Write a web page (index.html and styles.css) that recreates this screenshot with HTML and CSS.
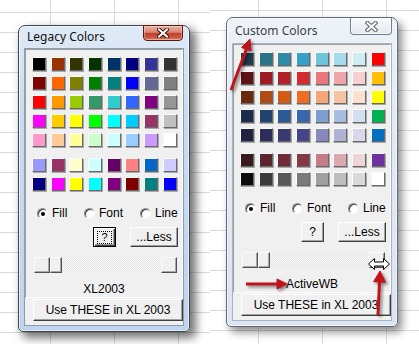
FILE: index.html
```html
<!DOCTYPE html>
<html lang="en">
<head>
    <meta charset="UTF-8">
    <title>Legacy & Custom Colors</title>
    <link rel="stylesheet" href="styles.css">
</head>
<body>

    <!-- worksheet behind the dialogs -->
    <div class="sheet">
        <div class="sheet-half sheet-left"></div>
        <div class="sheet-half sheet-right"></div>
    </div>

    <!-- Legacy Colors dialog (active) -->
    <div class="dialog dialog-legacy">
        <div class="titlebar">
            <span class="title">Legacy Colors</span>
            <button type="button" class="close close-active">
                <svg width="12" height="10" viewBox="0 0 12 10"><path d="M2 1.5 L10 8.5 M10 1.5 L2 8.5" stroke="#3b1610" stroke-width="4" stroke-linecap="square"/><path d="M2 1.5 L10 8.5 M10 1.5 L2 8.5" stroke="#fff" stroke-width="2" stroke-linecap="square"/></svg>
            </button>
        </div>
        <div class="client">
            <div class="panel">
                <div class="swatches" data-palette="legacy-main"></div>
                <div class="swatches" data-palette="legacy-chart"></div>
                <div class="radios">
                    <label class="radio"><span class="radio-dot checked"></span>Fill</label>
                    <label class="radio"><span class="radio-dot"></span>Font</label>
                    <label class="radio"><span class="radio-dot"></span>Line</label>
                </div>
                <div class="buttons">
                    <button type="button" class="btn btn-help btn-focus"><span class="focus-ring">?</span></button>
                    <button type="button" class="btn btn-less">...Less</button>
                </div>
                <div class="scrollbar">
                    <span class="sb-btn"></span>
                    <span class="sb-thumb"></span>
                    <span class="sb-track"></span>
                    <span class="sb-btn"></span>
                </div>
                <div class="caption">XL2003</div>
            </div>
            <button type="button" class="btn btn-use">Use THESE in XL 2003</button>
        </div>
    </div>

    <!-- Custom Colors dialog (inactive) -->
    <div class="dialog dialog-custom">
        <div class="titlebar">
            <span class="title">Custom Colors</span>
            <button type="button" class="close close-inactive">
                <svg width="13" height="11" viewBox="0 0 13 11"><path d="M2.5 2 L10.5 9 M10.5 2 L2.5 9" stroke="#5f6873" stroke-width="4.2" stroke-linecap="square"/><path d="M2.5 2 L10.5 9 M10.5 2 L2.5 9" stroke="#fff" stroke-width="2" stroke-linecap="square"/></svg>
            </button>
        </div>
        <div class="client">
            <div class="panel">
                <div class="swatches" data-palette="custom-main"></div>
                <div class="swatches" data-palette="custom-chart"></div>
                <div class="radios">
                    <label class="radio"><span class="radio-dot checked"></span>Fill</label>
                    <label class="radio"><span class="radio-dot"></span>Font</label>
                    <label class="radio"><span class="radio-dot"></span>Line</label>
                </div>
                <div class="buttons">
                    <button type="button" class="btn btn-help">?</button>
                    <button type="button" class="btn btn-less">...Less</button>
                </div>
                <div class="scrollbar">
                    <span class="sb-btn"></span>
                    <span class="sb-thumb"></span>
                    <span class="sb-track"></span>
                    <span class="sb-btn"></span>
                </div>
                <div class="caption">ActiveWB</div>
            </div>
            <button type="button" class="btn btn-use">Use THESE in XL 2003</button>
        </div>
    </div>

    <!-- red call-out arrows and the resize cursor -->
    <svg class="marks" width="419" height="344" viewBox="0 0 419 344">
        <g class="arrows" fill="#c0141c" stroke="#c0141c" stroke-width="3">
            <line x1="231" y1="90" x2="246.5" y2="49"/>
            <polygon stroke-width="1" points="250,39 251,51 241.5,47.5"/>
            <line x1="246" y1="284" x2="278" y2="284"/>
            <polygon stroke-width="1" points="287,284 277,279 277,289"/>
            <line x1="378" y1="315" x2="379.5" y2="282"/>
            <polygon stroke-width="1" points="380,271 385.5,282.3 373.5,281.7"/>
        </g>
        <polygon points="368.5,264 374.5,258.5 374.5,262 383.5,262 383.5,258.5 389.5,264 383.5,269.5 383.5,266 374.5,266 374.5,269.5" fill="#fff" stroke="#000" stroke-width="1"/>
    </svg>

    <script>
        // Excel 2003 palette and the custom theme shades, row by row
        const palettes = {
            'legacy-main': [
                '#000000', '#993300', '#333300', '#003300', '#003366', '#000080', '#333399', '#333333',
                '#800000', '#ff6600', '#808000', '#008000', '#008080', '#0000ff', '#666699', '#808080',
                '#ff0000', '#ff9900', '#99cc00', '#339966', '#33cccc', '#3366ff', '#800080', '#969696',
                '#ff00ff', '#ffcc00', '#ffff00', '#00ff00', '#00ffff', '#00ccff', '#993366', '#c0c0c0',
                '#ff99cc', '#ffcc99', '#ffff99', '#ccffcc', '#ccffff', '#99ccff', '#cc99ff', '#ffffff'
            ],
            'legacy-chart': [
                '#9999ff', '#993366', '#ffffcc', '#ccffff', '#660066', '#ff8080', '#0066cc', '#ccccff',
                '#000080', '#ff00ff', '#ffff00', '#00ffff', '#800080', '#800000', '#008080', '#0000ff'
            ],
            'custom-main': [
                '#1f3c4d', '#2b7389', '#2e8aa6', '#35a0c8', '#6fc4dd', '#a5dbec', '#d0ecf3', '#ff0000',
                '#5e1214', '#9e1b23', '#b02129', '#d82a2e', '#e8787d', '#f0a5a9', '#f6cfd1', '#ffc000',
                '#6a2b0c', '#b04a14', '#d45a16', '#f06c20', '#f4a678', '#f7c4a3', '#fbe0cf', '#ffff00',
                '#1b2d4b', '#23426d', '#2b5a98', '#3867b0', '#7c9ed3', '#a7bde2', '#d3dff0', '#00b050',
                '#21223f', '#2d2d5a', '#3a3a72', '#45468a', '#8888bd', '#b1b2d3', '#d8d8ea', '#0070c0'
            ],
            'custom-chart': [
                '#3b1a1f', '#5b262d', '#6f2c37', '#843744', '#c37c88', '#dca8b0', '#eed5da', '#7030a0',
                '#0d0d0d', '#3b3b3b', '#585858', '#7b7b7b', '#a0a0a0', '#bebebe', '#d9d9d9', '#ffffff'
            ]
        };

        document.querySelectorAll('.swatches').forEach(grid => {
            palettes[grid.dataset.palette].forEach(color => {
                const swatch = document.createElement('span');
                swatch.className = 'swatch';
                swatch.style.background = color;
                grid.appendChild(swatch);
            });
        });
    </script>

</body>
</html>
```

FILE: styles.css
```css
* {
    margin: 0;
    padding: 0;
    box-sizing: border-box;
}

body {
    width: 419px;
    height: 344px;
    overflow: hidden;
    position: relative;
    background: #fff;
    font-family: 'Liberation Sans Narrow', 'Liberation Sans', Arial, sans-serif;
    font-size: 12px;
    color: #000;
}

/* worksheet grid */
.sheet {
    display: flex;
    height: 100%;
}

.sheet-half {
    height: 100%;
    background-image:
        linear-gradient(90deg, #d9dadb 1px, transparent 1px),
        linear-gradient(#d9dadb 1px, transparent 1px);
    background-size: 64px 100%, 100% 20px;
}

.sheet-left {
    width: 210px;
    background-position: 50px 0, 0 12px;
}

.sheet-right {
    flex: 1;
    background-position: 48px 0, 0 10px;
}

/* dialog window */
.dialog {
    position: absolute;
    width: 172px;
    display: flex;
    flex-direction: column;
    padding: 0 5px 5px;
    border: 1px solid #3b4857;
    border-radius: 7px 7px 5px 5px;
}

.dialog-legacy {
    left: 18px;
    top: 25px;
    background: linear-gradient(#dfeaf7, #c9dbef 30%, #c0d5eb);
    box-shadow: inset 0 0 0 1px rgba(255, 255, 255, 0.55), 5px 5px 10px 1px rgba(0, 0, 0, 0.55);
}

.dialog-custom {
    left: 226px;
    top: 17px;
    border-color: #5d6a78;
    background: linear-gradient(#eef3f9, #e2eaf3 30%, #dce5ef);
    box-shadow: inset 0 0 0 1px rgba(255, 255, 255, 0.6), 4px 5px 9px 0 rgba(0, 0, 0, 0.45);
}

.titlebar {
    height: 22px;
    display: flex;
    justify-content: space-between;
    align-items: flex-start;
}

.dialog-custom .titlebar {
    height: 25px;
}

.title {
    font-family: 'Noto Sans', sans-serif;
    font-size: 12px;
    line-height: 22px;
    padding-left: 3px;
    color: #111;
}

.dialog-custom .title {
    line-height: 25px;
    color: #3e3e3e;
}

.close {
    display: flex;
    align-items: center;
    justify-content: center;
    border-radius: 0 0 4px 4px;
}

.close-active {
    width: 40px;
    height: 16px;
    margin: -1px 1px 0 0;
    border: 1px solid #5a1c12;
    background: linear-gradient(#eab1a3, #da8572 45%, #c4432e 52%, #c9533b 80%, #dd8a6c);
    box-shadow: inset 0 0 0 1px rgba(255, 255, 255, 0.35);
}

.close-inactive {
    width: 42px;
    height: 17px;
    margin: 0 0 0 0;
    border: 1px solid #6f7f90;
    border-top: none;
    background: linear-gradient(#f7f9fc, #e3e9f0);
    box-shadow: inset 0 0 0 1px rgba(255, 255, 255, 0.7);
}

.client {
    flex: 1;
    display: flex;
    flex-direction: column;
    padding-bottom: 4px;
    background: #f0f0f0;
    border: 1px solid #8a9cb2;
}

.dialog-custom .client {
    border-color: #a7b4c2;
}

.panel {
    display: flex;
    flex-direction: column;
    padding-top: 7px;
    border: 1px solid;
    border-color: #a0a0a0 #fff #fff #a0a0a0;
}

/* colour swatches */
.swatches {
    display: grid;
    grid-template-columns: repeat(8, 14px);
    column-gap: 4.7px;
    row-gap: 5px;
    margin-left: 6px;
}

.swatches + .swatches {
    margin-top: 11px;
}

.swatch {
    width: 14px;
    height: 14px;
    border: 1px solid;
    border-color: #fbfbfb #6b6b6b #6b6b6b #fbfbfb;
    box-shadow: 1px 1px 0 #a8a8a8;
}

/* Fill / Font / Line */
.radios {
    display: grid;
    grid-template-columns: 47px 56px auto;
    height: 14px;
    margin-top: 15px;
    padding-left: 11px;
    align-items: center;
}

.radio {
    display: flex;
    align-items: center;
    gap: 4px;
    line-height: 14px;
}

.radio-dot {
    position: relative;
    width: 11px;
    height: 11px;
    border-radius: 50%;
    background: #fff;
    border: 1px solid;
    border-color: #8a8a8a #f4f4f4 #f4f4f4 #8a8a8a;
    box-shadow: inset 1px 1px 0 #404040;
}

.radio-dot.checked::after {
    content: '';
    position: absolute;
    left: 3px;
    top: 3px;
    width: 4px;
    height: 4px;
    border-radius: 50%;
    background: #000;
}

/* push buttons */
.btn {
    height: 20px;
    display: flex;
    align-items: center;
    justify-content: center;
    font: inherit;
    color: #000;
    background: #f0f0f0;
    border: 1px solid;
    border-color: #fff #404040 #404040 #fff;
    box-shadow: inset -1px -1px 0 #a0a0a0;
}

.buttons {
    display: flex;
    justify-content: flex-end;
    gap: 14px;
    margin-top: 7px;
    padding-right: 4px;
}

.btn-help {
    width: 23px;
}

.btn-less {
    width: 48px;
}

.btn-focus {
    border-color: #000;
    box-shadow: inset 1px 1px 0 #fff, inset -1px -1px 0 #404040, inset -2px -2px 0 #a0a0a0;
}

.focus-ring {
    width: 15px;
    height: 13px;
    display: flex;
    align-items: center;
    justify-content: center;
    border: 1px dotted #000;
    font-size: 11px;
}

.btn-use {
    height: 22px;
    margin: 1px 0 0 8px;
}

/* scroll bar */
.scrollbar {
    display: flex;
    height: 16px;
    margin: 10px 5px 0 8px;
}

.sb-btn,
.sb-thumb {
    flex: none;
    width: 16px;
    background: #f0f0f0;
    border: 1px solid;
    border-color: #fafafa #505050 #505050 #fafafa;
    box-shadow: inset -1px -1px 0 #a8a8a8;
}

.sb-thumb {
    width: 12px;
}

.sb-track {
    flex: 1;
    background: repeating-conic-gradient(#e3e3e3 0 25%, #fafafa 0 50%) 0 0 / 2px 2px;
}

.caption {
    margin-top: 8px;
    line-height: 16px;
    text-align: center;
}

/* call-outs drawn over everything */
.marks {
    position: absolute;
    left: 0;
    top: 0;
    pointer-events: none;
}

.arrows {
    filter: drop-shadow(2px 2px 1.5px rgba(0, 0, 0, 0.45));
}
```
